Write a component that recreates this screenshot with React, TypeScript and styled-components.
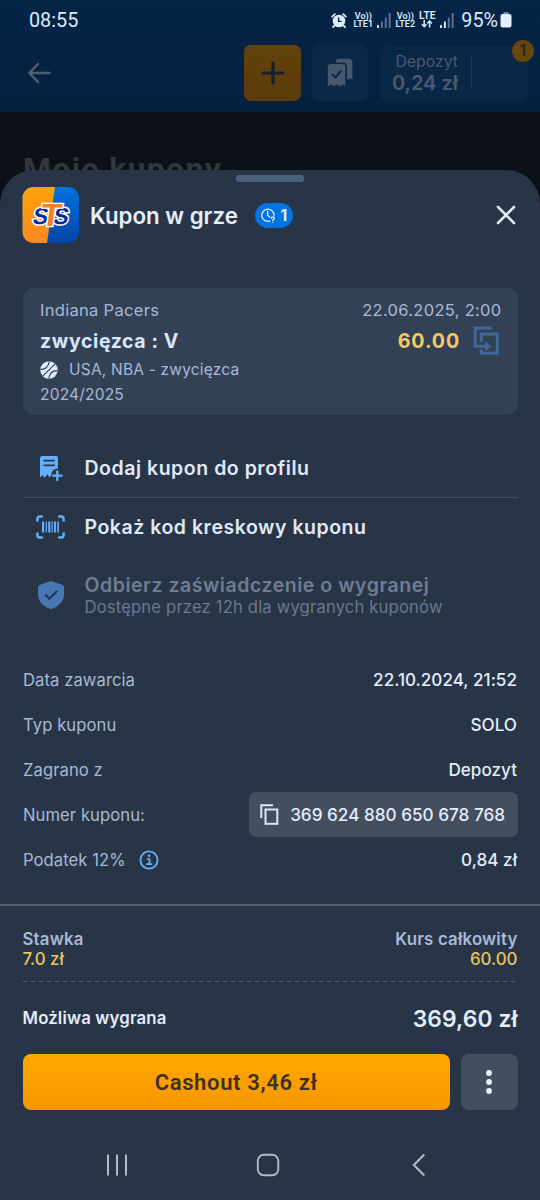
import React from "react";
import styled, { createGlobalStyle, css } from "styled-components";

const Global = createGlobalStyle`
  * { box-sizing: border-box; }
  html, body { margin: 0; padding: 0; background: #283547; }
  body { font-family: Inter, "Noto Sans", sans-serif; }
  svg { display: block; flex: none; }
`;

const type = (size: number, weight: number, color: string, spacing = 0) => css`
  font-size: ${size}px;
  font-weight: ${weight};
  color: ${color};
  letter-spacing: ${spacing}px;
  white-space: nowrap;
`;

const Screen = styled.div`
  position: relative;
  width: 540px;
  height: 1200px;
  overflow: hidden;
  background: #0c1118;
`;

const TopArea = styled.header`
  height: 112px;
  background: linear-gradient(#052446, #06203f);
`;

const StatusBar = styled.div`
  height: 40px;
  padding: 0 28px 0 29px;
  display: flex;
  align-items: center;
  justify-content: space-between;
  font-family: Roboto, sans-serif;
`;

const Clock = styled.span`
  ${type(19.8, 400, "#dcecfc", 0)}
`;

const StatusIcons = styled.div`
  display: flex;
  align-items: center;
`;

const NetLabel = styled.div<{ $w: number; $ml: number; $size?: number }>`
  width: ${(p) => p.$w}px;
  margin-left: ${(p) => p.$ml}px;
  display: flex;
  flex-direction: column;
  align-items: center;
  line-height: 8px;
  ${type(9, 600, "#dcecfc", 0)}
  font-size: ${(p) => p.$size ?? 9}px;
`;

const SignalSvg = styled.svg`
  margin-left: 4px;
`;

const BatteryText = styled.span`
  margin: 0 2px 0 7px;
  ${type(19.8, 400, "#dcecfc", 0)}
`;

const Toolbar = styled.div`
  height: 66px;
  padding: 0 12px 0 27px;
  display: flex;
  align-items: center;
`;

const Spacer = styled.div`
  flex: 1;
`;

const ToolButton = styled.div<{ $accent?: boolean }>`
  width: ${(p) => (p.$accent ? 57 : 56)}px;
  height: 56px;
  margin-right: ${(p) => (p.$accent ? 11 : 12)}px;
  border-radius: 7px;
  display: flex;
  align-items: center;
  justify-content: center;
  background: ${(p) => (p.$accent ? "linear-gradient(#61430b, #5c3b0b)" : "#0c2849")};
`;

const Wallet = styled.div`
  position: relative;
  width: 148px;
  height: 55px;
  border-radius: 8px;
  background: #0b2748;
  display: flex;
  align-items: center;
`;

const WalletText = styled.div`
  width: 78px;
  display: flex;
  flex-direction: column;
  align-items: flex-end;
`;

const WalletLabel = styled.span`
  line-height: 20px;
  ${type(15.8, 400, "#49596d", 0)}
`;

const WalletValue = styled.span`
  line-height: 22px;
  ${type(20, 600, "#4b5a6d", 0)}
`;

const WalletDivider = styled.div`
  width: 1px;
  height: 34px;
  margin-left: 13px;
  background: #1b3450;
`;

const WalletBadge = styled.span`
  position: absolute;
  right: -6px;
  top: -6px;
  width: 22px;
  height: 22px;
  border-radius: 50%;
  background: #65460b;
  text-align: center;
  line-height: 22px;
  ${type(15.5, 500, "#1e222b", 0)}
`;

const PageTitle = styled.h1`
  margin: 37px 0 0 23px;
  line-height: 40px;
  font-family: Roboto, sans-serif;
  ${type(32, 700, "#33363b", 1.3)}
`;

const Sheet = styled.section`
  position: absolute;
  inset: 170px 0 0 0;
  border-radius: 34px 34px 0 0;
  background: #283547;
  display: flex;
  flex-direction: column;
`;

const Handle = styled.div`
  width: 68px;
  height: 7px;
  margin: 5px auto 5px;
  border-radius: 3px;
  background: #4b5f80;
  flex: none;
`;

const SheetHeader = styled.div`
  height: 56px;
  margin: 0 24px 45px 22px;
  display: flex;
  align-items: center;
  flex: none;
`;

const SheetTitle = styled.h2`
  margin: 0 0 0 11px;
  ${type(22.3, 600, "#e6eefc", 0)}
`;

const CountBadge = styled.span`
  height: 25px;
  width: 38px;
  margin-left: 17px;
  border-radius: 13px;
  background: #0173e2;
  display: flex;
  align-items: center;
  justify-content: center;
  gap: 5px;
  ${type(15.5, 700, "#e6f1ff", 0)}
`;

const BetCard = styled.div`
  height: 127px;
  margin: 0 22.5px;
  padding: 9px 16px 0 17.5px;
  border-radius: 11px;
  background: #334157;
  flex: none;
`;

const BetRow = styled.div<{ $h: number }>`
  height: ${(p) => p.$h}px;
  display: flex;
  align-items: center;
  justify-content: space-between;
`;

const Team = styled.span`
  ${type(16.5, 400, "#a9b9d4", 0.3)}
`;

const Pick = styled.span`
  padding-top: 1px;
  ${type(19.5, 700, "#d9e5f8", 0.6)}
`;

const OddsGroup = styled.span`
  display: flex;
  align-items: center;
  gap: 13px;
  padding: 1px 1.5px 0 0;
  ${type(19.6, 700, "#f2cb61", 0.9)}
`;

const League = styled.span`
  display: flex;
  align-items: center;
  gap: 11px;
  ${type(15.5, 400, "#a9b9d4", 0.2)}
`;

const Actions = styled.div`
  margin: 23px 22.5px 0 22.5px;
  flex: none;
`;

const Action = styled.div<{ $h: number; $line?: boolean }>`
  height: ${(p) => p.$h}px;
  display: flex;
  align-items: center;
  border-bottom: ${(p) => (p.$line ? "1px solid #414e60" : "0")};
`;

const ActionIcon = styled.div`
  width: 56px;
  display: flex;
  justify-content: center;
  margin-right: 6px;
`;

const ActionLabel = styled.span<{ $muted?: boolean }>`
  display: block;
  line-height: 24px;
  ${type(19.5, 600, "#e0e9f9", 0.53)}
  color: ${(p) => (p.$muted ? "#6f7d92" : "#e0e9f9")};
`;

const ActionHint = styled.span`
  display: block;
  line-height: 20px;
  ${type(16.6, 400, "#6b788d", 0.18)}
`;

const Details = styled.dl`
  margin: 23px 23px 0;
  flex: none;
`;

const Detail = styled.div`
  height: 45px;
  display: flex;
  align-items: center;
  justify-content: space-between;
`;

const DetailName = styled.dt`
  display: flex;
  align-items: center;
  gap: 13px;
  ${type(16.6, 400, "#a9b9d4", 0.08)}
`;

const DetailValue = styled.dd`
  margin: 0;
  ${type(17.1, 500, "#e3edfb", 0.02)}
`;

const CopyBox = styled.dd`
  margin: 0 -0.5px 0 0;
  width: 269px;
  height: 45px;
  padding: 0 12.5px 0 11px;
  border-radius: 7px;
  background: #434e5e;
  display: flex;
  align-items: center;
  justify-content: space-between;
  ${type(17.15, 500, "#e3edfb", 0)}
`;

const Footer = styled.footer`
  margin-top: 22px;
  border-top: 2px solid #576371;
  padding: 23px 22.5px 0;
  flex: none;
`;

const Summary = styled.div`
  display: flex;
  justify-content: space-between;
  height: 52px;
`;

const SummaryCol = styled.div<{ $end?: boolean }>`
  display: flex;
  flex-direction: column;
  align-items: ${(p) => (p.$end ? "flex-end" : "flex-start")};
`;

const SummaryName = styled.span`
  line-height: 20px;
  ${type(16.8, 600, "#a9b9d9", 0.2)}
`;

const SummaryValue = styled.span`
  line-height: 20px;
  ${type(16.9, 500, "#e9c45d", 0)}
`;

const WinRow = styled.div`
  height: 72px;
  display: flex;
  align-items: center;
  justify-content: space-between;
`;

const WinName = styled.span`
  ${type(16.8, 600, "#e3edfb", 0.15)}
`;

const WinValue = styled.span`
  ${type(22.8, 600, "#e3edfb", 0.1)}
`;

const Buttons = styled.div`
  display: flex;
  gap: 11px;
`;

const Cashout = styled.div`
  width: 427.5px;
  height: 56px;
  border-radius: 8px;
  background: linear-gradient(#ffa800, #f79700);
  display: flex;
  align-items: center;
  justify-content: center;
  font-family: Roboto, sans-serif;
  ${type(22, 600, "#3d3126", 0.65)}
`;

const More = styled.div`
  width: 56.5px;
  height: 56px;
  border-radius: 8px;
  background: #434e5e;
  display: flex;
  align-items: center;
  justify-content: center;
`;

const NavBar = styled.nav`
  margin-top: 43px;
  padding-left: 41px;
  display: grid;
  grid-template-columns: 151px 151px 152px;
  justify-items: center;
  align-items: center;
  flex: none;
`;

const Signal = ({ level }: { level: number }) => (
  <SignalSvg width="14" height="15" viewBox="0 0 14 15">
    {[3, 6.5, 10.5, 15].map((h, i) => (
      <rect key={i} x={i * 3.9} y={15 - h} width="1.9" height={h} fill={i < level ? "#dcecfc" : "#5c7590"} />
    ))}
  </SignalSvg>
);

const Alarm = () => (
  <svg width="16" height="15" viewBox="0 0 16 15">
    <circle cx="8" cy="8" r="6.3" fill="#dcecfc" />
    <path d="M1.2 3.6 3.8 1.2M14.8 3.6 12.2 1.2M3.4 12.6 2 14.1M12.6 12.6 14 14.1" stroke="#dcecfc" strokeWidth="1.8" strokeLinecap="round" />
    <path d="M7.6 4.6V8.4H10.6" stroke="#052446" strokeWidth="1.4" fill="none" />
  </svg>
);

const DataArrows = () => (
  <svg width="12" height="8" viewBox="0 0 12 8">
    <path d="M3.2 0V6.4M.9 4.3 3.2 6.7 5.5 4.3M8.6 7.6V1.2M6.3 3.4 8.6 1 10.9 3.4" stroke="#dcecfc" strokeWidth="1.5" fill="none" />
  </svg>
);

const Coupons = () => (
  <svg width="26" height="30" viewBox="0 0 26 30">
    <path d="M9 3.5Q9 .8 12 .8H22.3Q25.3 .8 25.3 3.8V22L23.2 20 21 22 20 21V9Q20 4.5 15.6 4.5H9Z" fill="#46586e" />
    <path d="M.8 9Q.8 6 3.8 6H15.3Q18.3 6 18.3 9V28.6L15.7 26.3 12.9 28.6 9.9 26.3 7 28.6 4 26.3.8 28.6Z" fill="#46586e" />
    <path d="M5 16.3 8.4 19.5 14.3 12.6" stroke="#0c2849" strokeWidth="2.1" fill="none" />
  </svg>
);

const LogoMark = styled.text`
  font-family: "Liberation Sans", sans-serif;
  font-weight: 700;
  paint-order: stroke;
  stroke: #fff;
  stroke-linejoin: miter;
`;

const Logo = () => (
  <svg width="57" height="56" viewBox="0 0 57 56">
    <defs>
      <linearGradient id="lo" x1="0" y1="0" x2="0" y2="1">
        <stop offset="0" stopColor="#ffa30a" />
        <stop offset="1" stopColor="#f98820" />
      </linearGradient>
      <linearGradient id="lb" x1="0" y1="0" x2="0" y2="1">
        <stop offset="0" stopColor="#0173df" />
        <stop offset="1" stopColor="#0544a8" />
      </linearGradient>
      <clipPath id="lc">
        <rect x=".5" width="56.5" height="56" rx="11" />
      </clipPath>
    </defs>
    <g clipPath="url(#lc)">
      <rect width="57" height="56" fill="url(#lb)" />
      <path d="M0 0H33L25 56H0Z" fill="url(#lo)" />
    </g>
    <LogoMark transform="translate(10 37.4) skewX(-10)" fontSize="23" textLength="15" lengthAdjust="spacingAndGlyphs" strokeWidth="3" fill="#0a2a9a">S</LogoMark>
    <LogoMark transform="translate(30.5 37.4) skewX(-10)" fontSize="23" textLength="15" lengthAdjust="spacingAndGlyphs" strokeWidth="3" fill="#0a2a9a">S</LogoMark>
    <LogoMark transform="translate(17.4 39.4) skewX(-8)" fontSize="32" textLength="20.5" lengthAdjust="spacingAndGlyphs" strokeWidth="2.6" fill="#f58220">T</LogoMark>
  </svg>
);

const ClockQuestion = () => (
  <svg width="15" height="15" viewBox="0 0 15 15" fill="none" stroke="#e6f1ff" strokeWidth="1.3" strokeLinecap="round">
    <path d="M9 13A6.1 6.1 0 1 1 13 7.3" />
    <path d="M6.6 3.2V7.2L8.8 9" />
    <path d="M10.3 10.2Q10.4 8.9 11.8 8.9 13.3 9 13.3 10.2 13.2 11.2 11.9 11.8V12.4M11.9 14.2V14.3" />
  </svg>
);

const CloseIcon = () => (
  <svg width="20" height="20" viewBox="0 0 20 20">
    <path d="M2 2 18 18M18 2 2 18" stroke="#e6eefc" strokeWidth="2.6" strokeLinecap="round" />
  </svg>
);

const Ball = () => (
  <svg width="18" height="18" viewBox="0 0 18 18">
    <circle cx="9" cy="9" r="8.7" fill="#e0ebfb" />
    <path d="M2.8 15.2 15.2 2.8M.4 8.3Q7.8 8.8 9.3 .3M17.6 9.7Q10.2 9.2 8.7 17.7" stroke="#334157" strokeWidth="1.1" fill="none" />
  </svg>
);

const BetShare = () => (
  <svg width="27" height="30" viewBox="0 0 27 30" fill="none" stroke="#416997" strokeWidth="3">
    <path d="M18.5 2H2.2V20.3H15" />
    <path d="M8.2 16V8H24.3V27.3H8.2V23.3" />
    <path d="M12.2 15.4 18 20.3 12.2 25.2Z" fill="#416997" stroke="none" />
  </svg>
);

const ReceiptPlus = () => (
  <svg width="24" height="26" viewBox="0 0 24 26">
    <path d="M1 3Q1 1 3 1H17Q19 1 19 3V13.5Q12.5 14 12.3 20L10.6 22.5 8.4 19.3 5.8 22.8 3.4 20.2 1 22.8Z" fill="#66aef8" />
    <path d="M4.5 5.7H15.8M4.5 10.3H15.8" stroke="#283547" strokeWidth="1.7" />
    <path d="M18.3 16.3V25M14 20.6H22.8" stroke="#66aef8" strokeWidth="2.3" strokeLinecap="round" />
  </svg>
);

const Barcode = () => (
  <svg width="29" height="24" viewBox="0 0 29 24">
    <path d="M1.4 6.5V4Q1.4 1.4 4 1.4H6.8M22.2 1.4H25Q27.6 1.4 27.6 4V6.5M27.6 17.5V20Q27.6 22.6 25 22.6H22.2M6.8 22.6H4Q1.4 22.6 1.4 20V17.5" stroke="#66aef8" strokeWidth="2.5" fill="none" />
    <path d="M6 6.5H8.2V17.5H6ZM9.7 6.5H10.9V17.5H9.7ZM12.2 6.5H14.4V17.5H12.2ZM15.6 6.5H16.8V17.5H15.6ZM18 6.5H20V17.5H18ZM21.3 6.5H22.9V17.5H21.3Z" fill="#66aef8" />
  </svg>
);

const Shield = () => (
  <svg width="28" height="30" viewBox="0 0 28 30">
    <path d="M14 1 25 4.8Q27 5.6 27 7.5V15Q27 24.5 14 29.2 1 24.5 1 15V7.5Q1 5.6 3 4.8Z" fill="#4679b4" />
    <path d="M8.2 14.5 12.4 18.7 20 11" stroke="#283547" strokeWidth="2.3" fill="none" />
  </svg>
);

const CopyIcon = () => (
  <svg width="19" height="21" viewBox="0 0 19 21" fill="none" stroke="#dce8f8" strokeWidth="2">
    <path d="M1.3 14V1.3H13" />
    <rect x="5.5" y="5.5" width="11.8" height="14.3" />
  </svg>
);

const Info = () => (
  <svg width="20" height="20" viewBox="0 0 20 20" fill="none" stroke="#66aef8">
    <circle cx="10" cy="10" r="8.6" strokeWidth="1.9" />
    <path d="M8 9H10.5V14.2M7.2 14.2H13.2" strokeWidth="1.7" />
    <circle cx="10" cy="5.7" r="1.3" fill="#66aef8" stroke="none" />
  </svg>
);

export default function App() {
  return (
    <Screen>
      <Global />
      <TopArea>
        <StatusBar>
          <Clock>08:55</Clock>
          <StatusIcons>
            <Alarm />
            <NetLabel $w={20} $ml={6}><span>Vo))</span><span>LTE1</span></NetLabel>
            <Signal level={1} />
            <NetLabel $w={20} $ml={4}><span>Vo))</span><span>LTE2</span></NetLabel>
            <NetLabel $w={18} $ml={3} $size={10.2}><span>LTE</span><DataArrows /></NetLabel>
            <Signal level={2} />
            <BatteryText>95%</BatteryText>
            <svg width="12" height="16" viewBox="0 0 12 16">
              <rect x="3.5" y="0" width="5" height="3" fill="#6f8aa6" />
              <rect x=".5" y="2" width="11" height="13.5" rx="2" fill="#e3f0fd" />
            </svg>
          </StatusIcons>
        </StatusBar>
        <Toolbar>
          <svg width="25" height="22" viewBox="0 0 25 22" fill="none" stroke="#4f5f6d" strokeWidth="2.5" strokeLinecap="round" strokeLinejoin="round">
            <path d="M22.6 11H2.5M11 2 2.3 11 11 20" />
          </svg>
          <Spacer />
          <ToolButton $accent>
            <svg width="24" height="24" viewBox="0 0 24 24">
              <path d="M12 2V22M2 12H22" stroke="#16202e" strokeWidth="3.2" strokeLinecap="round" />
            </svg>
          </ToolButton>
          <ToolButton><Coupons /></ToolButton>
          <Wallet>
            <WalletText>
              <WalletLabel>Depozyt</WalletLabel>
              <WalletValue>0,24 zł</WalletValue>
            </WalletText>
            <WalletDivider />
            <WalletBadge>1</WalletBadge>
          </Wallet>
        </Toolbar>
      </TopArea>
      <PageTitle>Moje kupony</PageTitle>

      <Sheet>
        <Handle />
        <SheetHeader>
          <Logo />
          <SheetTitle>Kupon w grze</SheetTitle>
          <CountBadge><ClockQuestion />1</CountBadge>
          <Spacer />
          <CloseIcon />
        </SheetHeader>

        <BetCard>
          <BetRow $h={26}><Team>Indiana Pacers</Team><Team>22.06.2025, 2:00</Team></BetRow>
          <BetRow $h={34}><Pick>zwycięzca : V</Pick><OddsGroup>60.00<BetShare /></OddsGroup></BetRow>
          <BetRow $h={25}><League><Ball />USA, NBA - zwycięzca</League></BetRow>
          <BetRow $h={25}><League>2024/2025</League></BetRow>
        </BetCard>

        <Actions>
          <Action $h={60} $line>
            <ActionIcon><ReceiptPlus /></ActionIcon>
            <ActionLabel>Dodaj kupon do profilu</ActionLabel>
          </Action>
          <Action $h={58}>
            <ActionIcon><Barcode /></ActionIcon>
            <ActionLabel>Pokaż kod kreskowy kuponu</ActionLabel>
          </Action>
          <Action $h={78}>
            <ActionIcon><Shield /></ActionIcon>
            <div>
              <ActionLabel $muted>Odbierz zaświadczenie o wygranej</ActionLabel>
              <ActionHint>Dostępne przez 12h dla wygranych kuponów</ActionHint>
            </div>
          </Action>
        </Actions>

        <Details>
          <Detail><DetailName>Data zawarcia</DetailName><DetailValue>22.10.2024, 21:52</DetailValue></Detail>
          <Detail><DetailName>Typ kuponu</DetailName><DetailValue>SOLO</DetailValue></Detail>
          <Detail><DetailName>Zagrano z</DetailName><DetailValue>Depozyt</DetailValue></Detail>
          <Detail><DetailName>Numer kuponu:</DetailName><CopyBox><CopyIcon />369 624 880 650 678 768</CopyBox></Detail>
          <Detail><DetailName>Podatek 12%<Info /></DetailName><DetailValue>0,84 zł</DetailValue></Detail>
        </Details>

        <Footer>
          <Summary>
            <SummaryCol><SummaryName>Stawka</SummaryName><SummaryValue>7.0 zł</SummaryValue></SummaryCol>
            <SummaryCol $end><SummaryName>Kurs całkowity</SummaryName><SummaryValue>60.00</SummaryValue></SummaryCol>
          </Summary>
          <svg width="495" height="1" viewBox="0 0 495 1">
            <path d="M0 .5H495" stroke="#556274" strokeWidth="1" strokeDasharray="4 4" />
          </svg>
          <WinRow><WinName>Możliwa wygrana</WinName><WinValue>369,60 zł</WinValue></WinRow>
          <Buttons>
            <Cashout>Cashout 3,46 zł</Cashout>
            <More>
              <svg width="6" height="24" viewBox="0 0 6 24" fill="#eaf2ff">
                <circle cx="3" cy="3" r="2.9" /><circle cx="3" cy="12" r="2.9" /><circle cx="3" cy="21" r="2.9" />
              </svg>
            </More>
          </Buttons>
        </Footer>

        <NavBar>
          <svg width="22" height="24" viewBox="0 0 22 24">
            <path d="M2 1.5V22.5M11 1.5V22.5M20 1.5V22.5" stroke="#b3bac5" strokeWidth="2" />
          </svg>
          <svg width="24" height="24" viewBox="0 0 24 24">
            <rect x="1.8" y="1.8" width="20.5" height="20.5" rx="6" fill="none" stroke="#b3bac5" strokeWidth="1.9" />
          </svg>
          <svg width="14" height="24" viewBox="0 0 14 24">
            <path d="M12.3 1.5 1.8 12 12.3 22.5" fill="none" stroke="#b3bac5" strokeWidth="2" />
          </svg>
        </NavBar>
      </Sheet>
    </Screen>
  );
}
